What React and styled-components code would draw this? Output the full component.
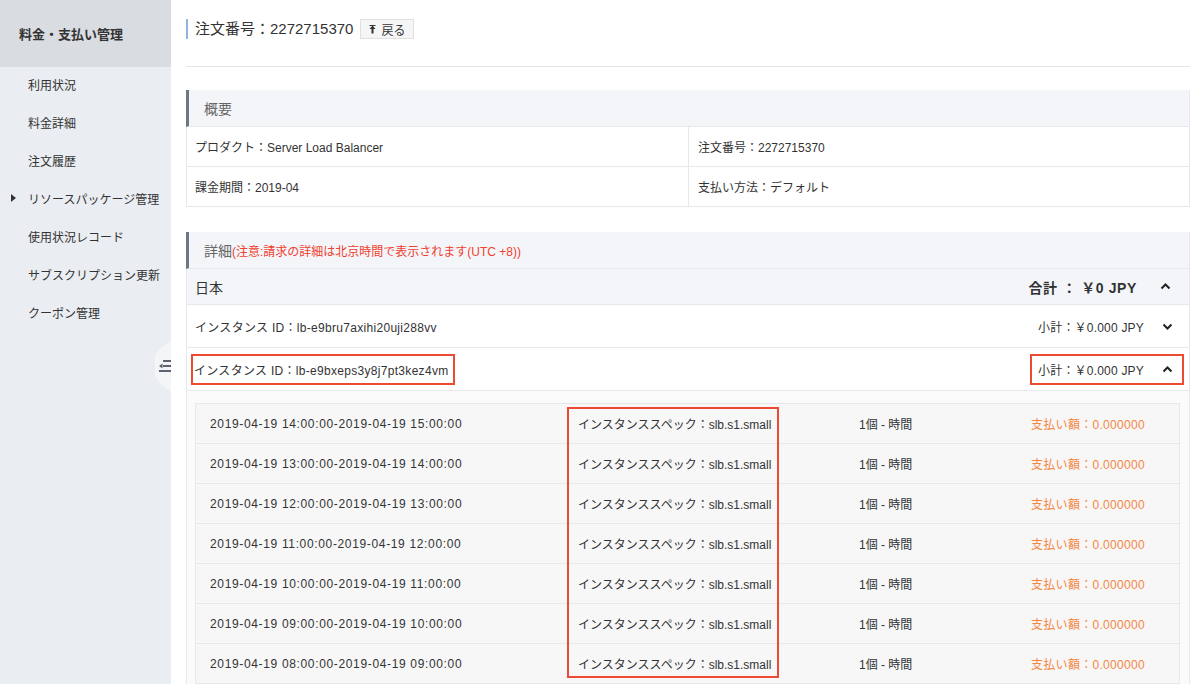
import styled, { createGlobalStyle } from "styled-components";

const GlobalStyle = createGlobalStyle`
    html, body {
        margin: 0;
        padding: 0;
        background: #fff;
        overflow: hidden;
    }
    body {
        font-family: "Liberation Sans", "Noto Sans CJK JP", sans-serif;
        color: #333;
        font-size: 12px;
    }
`;

const Page = styled.div`
    display: flex;
    min-height: 100vh;
`;

const Sidebar = styled.aside`
    position: relative;
    width: 171px;
    flex-shrink: 0;
    background: #eaedf1;
`;

const SideHeader = styled.div`
    height: 67px;
    background: #d9dce1;
    display: flex;
    align-items: center;
    padding-left: 19px;
    padding-bottom: 1px;
    box-sizing: border-box;
    font-size: 13px;
    font-weight: bold;
    color: #333;
`;

const SideItem = styled.div`
    position: relative;
    height: 38px;
    display: flex;
    align-items: center;
    padding-left: 28px;
    padding-bottom: 3px;
    box-sizing: border-box;
    font-size: 12px;
    color: #333;
`;

const Caret = styled.span`
    position: absolute;
    left: 11px;
    top: 13px;
    width: 0;
    height: 0;
    border-top: 4px solid transparent;
    border-bottom: 4px solid transparent;
    border-left: 5px solid #333;
`;

const Handle = styled.div`
    position: absolute;
    right: 0;
    top: 340px;
    width: 16px;
    height: 52px;
    background: #f4f5f7;
    clip-path: polygon(100% 0, 35% 16%, 0 30%, 0 70%, 35% 84%, 100% 100%);
    display: flex;
    align-items: center;
    justify-content: flex-end;
`;

const Main = styled.main`
    flex: 1;
    padding: 0 10px 0 15px;
`;

const TopBar = styled.div`
    height: 67px;
    box-sizing: border-box;
    padding-top: 19px;
    border-bottom: 1px solid #e3e5e8;
    display: flex;
    align-items: flex-start;
    gap: 7px;
`;

const Title = styled.h1`
    margin: 0;
    height: 20px;
    display: flex;
    align-items: center;
    font-size: 15px;
    font-weight: normal;
    color: #333;
    border-left: 2px solid #8fb6e0;
    padding-left: 7px;
    line-height: 14px;
`;

const BackButton = styled.button`
    height: 20px;
    padding: 0 8px;
    border: 1px solid #e0e0e0;
    background: #f5f5f5;
    font-family: inherit;
    font-size: 12px;
    color: #333;
    display: flex;
    align-items: center;
    gap: 5px;
`;

const Panel = styled.section`
    margin-top: ${p => p.$top}px;
    border-right: 1px solid #e6e8ec;
`;

const PanelHeader = styled.div`
    height: 37px;
    box-sizing: border-box;
    background: #f4f5f9;
    border-left: 3px solid #707584;
    border-bottom: 1px solid #e6e8ec;
    display: flex;
    align-items: center;
    padding-left: 15px;
    font-size: 14px;
    color: #666;
`;

const Note = styled.span`
    font-size: 12px;
    color: #f0402e;
`;

const InfoGrid = styled.div`
    display: grid;
    grid-template-columns: 501px 1fr;
    border-left: 1px solid #e6e8ec;
`;

const InfoCell = styled.div`
    height: 40px;
    box-sizing: border-box;
    display: flex;
    align-items: center;
    padding-left: ${p => (p.$right ? 9 : 8)}px;
    border-bottom: 1px solid #e6e8ec;
    border-left: ${p => (p.$right ? "1px solid #e6e8ec" : "none")};
    font-size: 12px;
    color: #333;
`;

const Row = styled.div`
    height: ${p => p.$h}px;
    box-sizing: border-box;
    display: flex;
    align-items: center;
    justify-content: space-between;
    padding: 0 18px 0 ${p => p.$pl || 8}px;
    background: ${p => p.$bg || "#fff"};
    border-left: 1px solid #e6e8ec;
    border-bottom: 1px solid #e6e8ec;
    font-size: ${p => p.$fs || 12}px;
    color: #333;
`;

const Total = styled.div`
    display: flex;
    align-items: center;
    gap: 23px;
    font-weight: bold;
    font-size: 14px;
    letter-spacing: 0.6px;
`;

const Sub = styled.div`
    display: flex;
    align-items: center;
    gap: 18px;
    padding: 6px 10px 6px 7px;
    margin-right: -12px;
    letter-spacing: 0.2px;
    outline: ${p => (p.$marked ? "2px solid #ec4a33" : "none")};
    outline-offset: -1px;
`;

const Marked = styled.span`
    padding: 6px 6px 6px 2px;
    margin-left: -3px;
    letter-spacing: 0.3px;
    outline: ${p => (p.$marked ? "2px solid #ec4a33" : "none")};
    outline-offset: -1px;
`;

const PlainId = styled.span`
    letter-spacing: 0.3px;
`;

const Expanded = styled.div`
    background: #fbfbfc;
    border-left: 1px solid #e6e8ec;
    padding: 12px 9px 0 8px;
`;

const SubTable = styled.div`
    position: relative;
    border: 1px solid #e6e8ec;
    border-bottom: none;
`;

const SubRow = styled.div`
    display: grid;
    grid-template-columns: 372px 281px 173px 1fr;
    height: 40px;
    box-sizing: border-box;
    background: #f7f7f8;
    border-bottom: 1px solid #e6e8ec;
    align-items: center;
    font-size: 12px;
    color: #333;
`;

const Cell = styled.div`
    padding-left: ${p => p.$pl}px;
    color: ${p => p.$color || "#333"};
    letter-spacing: ${p => p.$ls || 0}px;
    white-space: nowrap;
`;

const SpecBox = styled.div`
    position: absolute;
    left: 371px;
    top: 3px;
    width: 212px;
    height: 271px;
    box-sizing: border-box;
    border: 2px solid #ec4a33;
    pointer-events: none;
`;

const Chevron = ({ up }) => (
    <svg width="11" height="7" viewBox="0 0 11 7">
        <path d={up ? "M1.5 5.5 L5.5 1.5 L9.5 5.5" : "M1.5 1.5 L5.5 5.5 L9.5 1.5"} fill="none" stroke="#222" strokeWidth="2" />
    </svg>
);

const UpIcon = () => (
    <svg width="7" height="9" viewBox="0 0 7 9">
        <path d="M3.5 0.5 L6.5 4 L4.5 4 L4.5 8.5 L2.5 8.5 L2.5 4 L0.5 4 Z" fill="#333" />
        <rect x="0.5" y="0" width="6" height="1" fill="#333" />
    </svg>
);

const OutdentIcon = () => (
    <svg width="12" height="14" viewBox="0 0 12 14">
        <rect x="4" y="1" width="8" height="2" fill="#5b6270" />
        <rect x="4" y="6" width="8" height="2" fill="#5b6270" />
        <path d="M0 7 L3.5 4.5 L3.5 9.5 Z" fill="#5b6270" />
        <rect x="0" y="11" width="12" height="2" fill="#5b6270" />
    </svg>
);

const menu = ["利用状況", "料金詳細", "注文履歴", "リソースパッケージ管理", "使用状況レコード", "サブスクリプション更新", "クーポン管理"];

const hours = ["14", "13", "12", "11", "10", "09", "08"];

const pad = n => String(n).padStart(2, "0");

export default function App() {
    return (
        <Page>
            <GlobalStyle />
            <Sidebar>
                <SideHeader>料金・支払い管理</SideHeader>
                {menu.map((item, index) => (
                    <SideItem key={index}>
                        {index === 3 ? <Caret /> : null}
                        {item}
                    </SideItem>
                ))}
                <Handle>
                    <OutdentIcon />
                </Handle>
            </Sidebar>

            <Main>
                <TopBar>
                    <Title>注文番号：2272715370</Title>
                    <BackButton><UpIcon /> 戻る</BackButton>
                </TopBar>

                <Panel $top={23}>
                    <PanelHeader>概要</PanelHeader>
                    <InfoGrid>
                        <InfoCell>プロダクト：Server Load Balancer</InfoCell>
                        <InfoCell $right>注文番号：2272715370</InfoCell>
                        <InfoCell>課金期間：2019-04</InfoCell>
                        <InfoCell $right>支払い方法：デフォルト</InfoCell>
                    </InfoGrid>
                </Panel>

                <Panel $top={25}>
                    <PanelHeader>詳細<Note>(注意:請求の詳細は北京時間で表示されます(UTC +8))</Note></PanelHeader>
                    <Row $h={36} $bg="#f4f5f9" $fs={14}>
                        <span>日本</span>
                        <Total>合計 ： ￥0 JPY <Chevron up /></Total>
                    </Row>
                    <Row $h={43}>
                        <PlainId>インスタンス ID：lb-e9bru7axihi20uji288vv</PlainId>
                        <Sub>小計：￥0.000 JPY <Chevron /></Sub>
                    </Row>
                    <Row $h={43}>
                        <Marked $marked>インスタンス ID：lb-e9bxeps3y8j7pt3kez4vm</Marked>
                        <Sub $marked>小計：￥0.000 JPY <Chevron up /></Sub>
                    </Row>
                    <Expanded>
                        <SubTable>
                            {hours.map((h, index) => (
                                <SubRow key={index}>
                                    <Cell $pl={14} $ls={0.65}>2019-04-19 {h}:00:00-2019-04-19 {pad(Number(h) + 1)}:00:00</Cell>
                                    <Cell $pl={10}>インスタンススペック：slb.s1.small</Cell>
                                    <Cell $pl={10}>1個 - 時間</Cell>
                                    <Cell $pl={9} $ls={0.3} $color="#f5863f">支払い額：0.000000</Cell>
                                </SubRow>
                            ))}
                            <SpecBox />
                        </SubTable>
                    </Expanded>
                </Panel>
            </Main>
        </Page>
    );
}
